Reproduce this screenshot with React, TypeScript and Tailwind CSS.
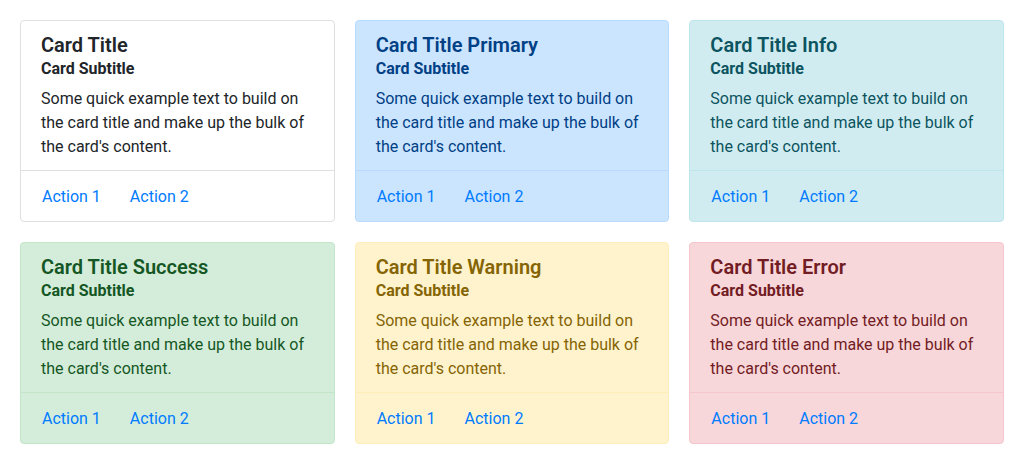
const cards = [
  { title: "Card Title", bg: "bg-white", border: "border-[#dfdfdf]", text: "text-[#212529]" },
  { title: "Card Title Primary", bg: "bg-[#cce5ff]", border: "border-[#b8daff]", text: "text-[#004085]" },
  { title: "Card Title Info", bg: "bg-[#d1ecf1]", border: "border-[#bee5eb]", text: "text-[#0c5460]" },
  { title: "Card Title Success", bg: "bg-[#d4edda]", border: "border-[#c3e6cb]", text: "text-[#155724]" },
  { title: "Card Title Warning", bg: "bg-[#fff3cd]", border: "border-[#ffeeba]", text: "text-[#856404]" },
  { title: "Card Title Error", bg: "bg-[#f8d7da]", border: "border-[#f5c6cb]", text: "text-[#721c24]" },
]

const Card = ({ title, bg, border, text }: (typeof cards)[number]) => (
  <div className={`flex flex-col rounded border ${bg} ${border} ${text}`}>
    <div className="px-5 pt-3 pb-[11px]">
      <h5 className="text-[20px] leading-[24px] font-semibold">{title}</h5>
      <h6 className="mt-0.5 text-[16px] leading-[19.2px] font-bold">Card Subtitle</h6>
      <p className="mt-[9px] text-[16px] leading-6">
        Some quick example text to build on the card title and make up the bulk of the card's content.
      </p>
    </div>
    <div className={`flex h-[51px] items-center gap-[29px] border-t pt-0.5 pr-5 pl-[21px] ${border}`}>
      <a className="cursor-pointer text-[16px] leading-6 text-[#007bff]">Action 1</a>
      <a className="cursor-pointer text-[16px] leading-6 text-[#007bff]">Action 2</a>
    </div>
  </div>
)

export default function App() {
  return (
    <div className="min-h-[464px] bg-white font-['Roboto',sans-serif]">
      <div className="grid grid-cols-3 gap-5 p-5">
        {cards.map((c) => (
          <Card key={c.title} {...c} />
        ))}
      </div>
    </div>
  )
}
